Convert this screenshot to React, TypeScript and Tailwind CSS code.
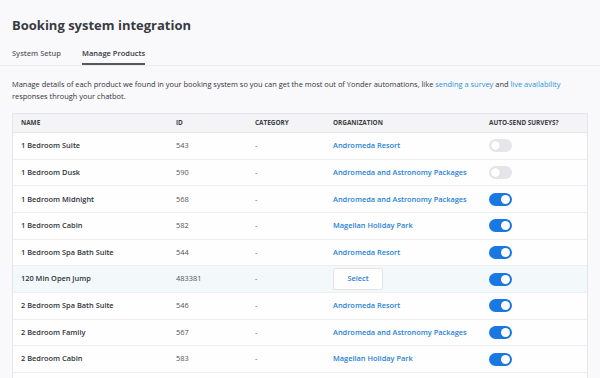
import React from "react";

type Product = {
  name: string;
  id: string;
  org: string | null;
  auto: boolean;
  highlight?: boolean;
};

const PRODUCTS: Product[] = [
  { name: "1 Bedroom Suite", id: "543", org: "Andromeda Resort", auto: false },
  { name: "1 Bedroom Dusk", id: "590", org: "Andromeda and Astronomy Packages", auto: false },
  { name: "1 Bedroom Midnight", id: "568", org: "Andromeda and Astronomy Packages", auto: true },
  { name: "1 Bedroom Cabin", id: "582", org: "Magellan Holiday Park", auto: true },
  { name: "1 Bedroom Spa Bath Suite", id: "544", org: "Andromeda Resort", auto: true },
  { name: "120 Min Open Jump", id: "483381", org: null, auto: true, highlight: true },
  { name: "2 Bedroom Spa Bath Suite", id: "546", org: "Andromeda Resort", auto: true },
  { name: "2 Bedroom Family", id: "567", org: "Andromeda and Astronomy Packages", auto: true },
  { name: "2 Bedroom Cabin", id: "583", org: "Magellan Holiday Park", auto: true },
];

function Toggle({ on }: { on: boolean }) {
  return (
    <div
      className={
        on
          ? "flex h-[13px] w-[23px] items-center justify-end rounded-full bg-[#1a78e2] px-[2px]"
          : "flex h-[13px] w-[23px] items-center justify-start rounded-full bg-[#e6e5e9] px-[2px]"
      }
    >
      <div className="h-[9px] w-[9px] rounded-full bg-white shadow-[0_0_1px_rgba(0,0,0,0.2)]" />
    </div>
  );
}

export default function App() {
  return (
    <div
      className="h-[378px] w-[600px] overflow-hidden bg-[#f9f9fb] text-[#33373d]"
      style={{ fontFamily: '"Open Sans", sans-serif' }}
    >
      <h1 className="px-3 pt-[15px] text-[13px] font-bold leading-[20px] text-[#383b42]">
        Booking system integration
      </h1>

      <div className="mt-[13px] flex gap-[21px] border-b border-[#ebebee] px-3 text-[7.5px] font-semibold">
        <div className="pb-[6px] text-[#5e6168]">System Setup</div>
        <div className="border-b-2 border-[#55585e] pb-[4px] text-[#34373d]">Manage Products</div>
      </div>

      <p className="mt-[12px] px-3 text-[7.45px] leading-[12px] text-[#30343a]">
        Manage details of each product we found in your booking system so you can get the most out of
        Yonder automations, like <span className="text-[#2a93dc]">sending a survey</span> and{" "}
        <span className="text-[#2a93dc]">live availability</span> responses through your chatbot.
      </p>

      <div className="mx-3 mt-[11px] border border-[#e6e6ea] bg-[#fefefe]">
        <div className="grid h-[18.7px] grid-cols-[155px_79px_78px_156px_1fr] items-center border-b border-[#e6e6ea] bg-[#f4f4f6] px-2 text-[6.4px] font-bold text-[#3a3d43]">
          <div>NAME</div>
          <div>ID</div>
          <div>CATEGORY</div>
          <div>ORGANIZATION</div>
          <div>AUTO-SEND SURVEYS?</div>
        </div>
        {PRODUCTS.map((p) => (
          <div
            key={p.name}
            className={
              "grid h-[26.67px] grid-cols-[155px_79px_78px_156px_1fr] items-center border-b border-[#efeff2] px-2 text-[7.4px] " +
              (p.highlight ? "bg-[#f3f9fb]" : "")
            }
          >
            <div className="font-semibold text-[#2f3339]">{p.name}</div>
            <div className="text-[#50545a]">{p.id}</div>
            <div className="text-[#50545a]">-</div>
            <div>
              {p.org ? (
                <span className="font-semibold text-[#1f82d6]">{p.org}</span>
              ) : (
                <button className="flex h-[22px] w-[50px] items-center justify-center rounded-[2px] border border-[#e4e4e8] bg-white font-semibold text-[#1f82d6]">
                  Select
                </button>
              )}
            </div>
            <div>
              <Toggle on={p.auto} />
            </div>
          </div>
        ))}
        <div className="h-[26px]" />
      </div>
    </div>
  );
}
